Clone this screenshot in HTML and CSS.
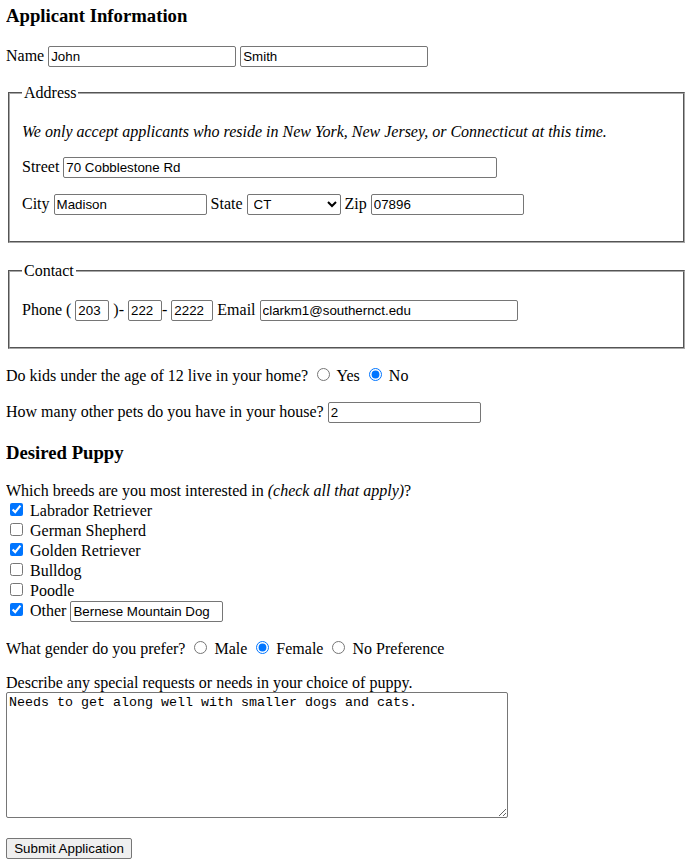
FILE: index.html
```html
<!DOCTYPE html>
<html lang="en">
<head>
<meta charset="utf-8">
<title>Puppy Application</title>
<link rel="stylesheet" href="styles.css">
</head>
<body>
<form class="app-form">
  <h3 class="section-title first">Applicant Information</h3>
  <p class="row name-row">Name <input class="field w-name" type="text" value="John"> <input class="field w-name" type="text" value="Smith"></p>

  <fieldset class="group">
    <legend>Address</legend>
    <p class="row"><em>We only accept applicants who reside in New York, New Jersey, or Connecticut at this time.</em></p>
    <p class="row">Street <input class="field w-street" type="text" value="70 Cobblestone Rd"></p>
    <p class="row">City <input class="field w-std" type="text" value="Madison"> State <select class="field w-state"><option>CT</option><option>NY</option><option>NJ</option></select> Zip <input class="field w-std" type="text" value="07896"></p>
  </fieldset>

  <fieldset class="group contact">
    <legend>Contact</legend>
    <p class="row">Phone ( <input class="field w-area" type="text" value="203"> )- <input class="field w-area" type="text" value="222">- <input class="field w-line" type="text" value="2222"> Email <input class="field w-email" type="text" value="clarkm1@southernct.edu"></p>
  </fieldset>

  <p class="row">Do kids under the age of 12 live in your home? <input type="radio" name="kids"> Yes <input type="radio" name="kids" checked> No</p>
  <p class="row pets">How many other pets do you have in your house? <input class="field w-std" type="text" value="2"></p>

  <h3 class="section-title">Desired Puppy</h3>
  <p class="row breeds">Which breeds are you most interested in <em>(check all that apply)</em>?<br>
    <input type="checkbox" checked> Labrador Retriever<br>
    <input type="checkbox"> German Shepherd<br>
    <input type="checkbox" checked> Golden Retriever<br>
    <input type="checkbox"> Bulldog<br>
    <input type="checkbox"> Poodle<br>
    <input type="checkbox" checked> Other <input class="field w-std" type="text" value="Bernese Mountain Dog">
  </p>
  <p class="row">What gender do you prefer? <input type="radio" name="gender"> Male <input type="radio" name="gender" checked> Female <input type="radio" name="gender"> No Preference</p>
  <p class="row">Describe any special requests or needs in your choice of puppy.<br>
    <textarea class="notes">Needs to get along well with smaller dogs and cats.</textarea>
  </p>
  <p class="row"><button class="submit" type="submit">Submit Application</button></p>
</form>
</body>
</html>
```
FILE: styles.css
```css
html, body {
  background: #fff;
}
body {
  margin: 0 6px;
  font-family: "Liberation Serif", "Times New Roman", serif;
  font-size: 16px;
  color: #000;
}
.section-title {
  font-size: 18.72px;
  font-weight: bold;
  margin: 18.72px 0;
}
.section-title.first {
  margin-top: 5px;
}
.row {
  margin: 16px 0;
}
.name-row {
  margin-bottom: 17px;
}
.group {
  margin: 0 2px;
  padding: 0.35em 0.75em 0.625em;
  border: 2px groove #a8a8a8;
}
.group legend {
  padding: 0 2px;
}
.group.contact {
  margin-top: 19px;
  padding-top: 3.6px;
  padding-bottom: 10px;
}
.pets {
  margin-top: 17px;
}
.breeds {
  margin-top: 17px;
}
.field {
  font-family: "Liberation Sans", Arial, Helvetica, sans-serif;
  font-size: 13.333px;
  box-sizing: border-box;
  height: 21px;
  padding: 1px 2px;
  border: 1px solid #767676;
  border-radius: 2px;
  background: #fff;
  color: #000;
}
.w-name { width: 188px; }
.w-street { width: 434px; }
.w-std { width: 153px; }
.w-state { width: 94px; }
.w-area { width: 34px; }
.w-line { width: 42px; }
.w-email { width: 258px; }
.notes {
  font-family: "Liberation Mono", "Courier New", monospace;
  font-size: 13.333px;
  box-sizing: border-box;
  width: 502px;
  height: 126px;
  padding: 2px;
  border: 1px solid #767676;
  border-radius: 2px;
}
.submit {
  font-family: "Liberation Sans", Arial, Helvetica, sans-serif;
  font-size: 13.333px;
  box-sizing: border-box;
  width: 126px;
  height: 21px;
  padding: 1px 6px;
  background: #efefef;
  border: 1px solid #767676;
  border-radius: 2px;
  color: #000;
}
```
